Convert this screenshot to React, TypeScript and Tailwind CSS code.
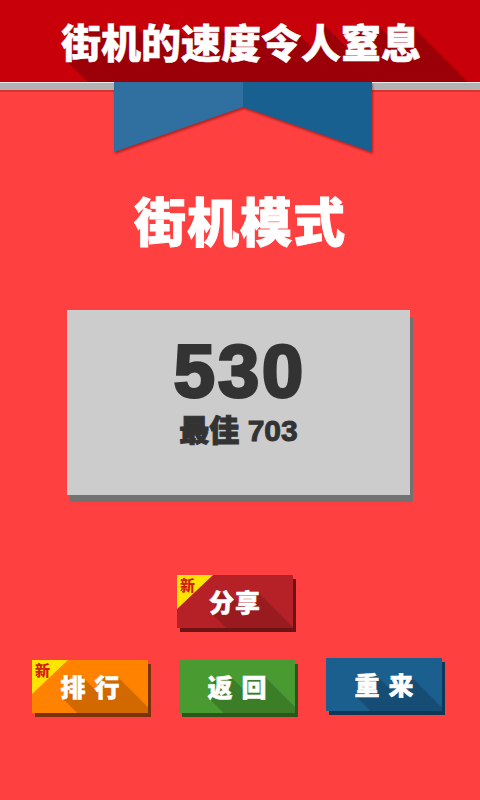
import React from "react";

// long diagonal shadow behind text, colour comes from --ls
const longShadow =
  "[text-shadow:1px_1px_0_var(--ls),2px_2px_0_var(--ls),4px_4px_0_var(--ls),6px_6px_0_var(--ls),8px_8px_0_var(--ls),10px_10px_0_var(--ls),12px_12px_0_var(--ls),14px_14px_0_var(--ls),16px_16px_0_var(--ls),18px_18px_0_var(--ls),20px_20px_0_var(--ls),22px_22px_0_var(--ls),24px_24px_0_var(--ls),26px_26px_0_var(--ls),28px_28px_0_var(--ls),30px_30px_0_var(--ls),32px_32px_0_var(--ls),34px_34px_0_var(--ls),36px_36px_0_var(--ls),38px_38px_0_var(--ls),40px_40px_0_var(--ls),42px_42px_0_var(--ls),44px_44px_0_var(--ls),46px_46px_0_var(--ls),48px_48px_0_var(--ls),50px_50px_0_var(--ls),52px_52px_0_var(--ls),54px_54px_0_var(--ls),56px_56px_0_var(--ls),58px_58px_0_var(--ls),60px_60px_0_var(--ls)]";

const cjk = "font-['Noto_Sans_CJK_SC',sans-serif]";

type BtnProps = {
  label: string;
  bg: string;
  isNew?: boolean;
  spaced?: boolean;
};

function GameButton({ label, bg, isNew, spaced }: BtnProps) {
  return (
    <button
      className={`relative w-[116px] h-[53px] overflow-hidden flex items-center justify-center ${bg}`}
    >
      <span
        className={`${cjk} ${longShadow} text-white font-black text-[25px] leading-none [-webkit-text-stroke:0.5px_#ffffff] ${
          spaced ? "tracking-[9px] pl-[9px]" : "tracking-[1px]"
        }`}
      >
        {label}
      </span>
      {isNew && (
        <span className="absolute left-0 top-0 w-[36px] h-[34px] bg-[#ffe400] [clip-path:polygon(0_0,100%_0,0_100%)]">
          <span
            className={`${cjk} absolute left-[3px] top-[2px] text-[15px] leading-none font-black text-[#d0200f]`}
          >
            新
          </span>
        </span>
      )}
    </button>
  );
}

export default function App() {
  return (
    <div className="w-[480px] h-[800px] bg-[#fe4040] flex flex-col overflow-hidden">
      {/* top banner */}
      <div className="h-[82px] bg-[#c7000a] flex items-center justify-center overflow-hidden [--ls:#9b0008]">
        <h1
          className={`${cjk} ${longShadow} text-white font-black text-[40px] leading-none pl-[2px] [-webkit-text-stroke:0.5px_#ffffff]`}
        >
          街机的速度令人窒息
        </h1>
      </div>

      {/* grey rule with the ribbon hanging off it */}
      <div className="flex items-start h-[70px]">
        <div className="w-[114px] h-[10px] flex flex-col">
          <div className="h-[1px] bg-[#ececec]" />
          <div className="h-[7px] bg-[#b3b3b3]" />
          <div className="h-[2px] bg-[#d83434]" />
        </div>
        <svg
          width="258"
          height="70"
          viewBox="0 0 258 70"
          className="drop-shadow-[1px_2px_1px_rgba(90,0,0,0.45)]"
        >
          <polygon points="0,0 129,0 129,25 0,70" fill="#2f70a0" />
          <polygon points="129,0 258,0 258,70 129,25" fill="#17608f" />
        </svg>
        <div className="flex-1 h-[10px] flex flex-col">
          <div className="h-[1px] bg-[#ececec]" />
          <div className="h-[7px] bg-[#b3b3b3]" />
          <div className="h-[2px] bg-[#d83434]" />
        </div>
      </div>

      {/* mode title */}
      <h2
        className={`${cjk} mt-[42px] h-[52px] text-center text-white font-black text-[52px] leading-none tracking-[1px] [-webkit-text-stroke:1px_#ffffff]`}
      >
        街机模式
      </h2>

      {/* score card */}
      <div className="mt-[64px] ml-[67px] w-[343px] h-[185px] bg-[#cccccc] shadow-[3px_7px_0_#727272] flex flex-col items-center pt-[25px]">
        <div className="font-['Liberation_Sans',sans-serif] font-bold text-[74px] leading-none text-[#333333] tracking-[3px] pl-[3px] [-webkit-text-stroke:3px_#333333]">
          530
        </div>
        <div className="mt-[7px] font-['Liberation_Sans','Noto_Sans_CJK_SC',sans-serif] font-black text-[30px] leading-none text-[#333333] [-webkit-text-stroke:1px_#333333]">
          最佳 703
        </div>
      </div>

      {/* share */}
      <div className="mt-[80px] ml-[177px] flex">
        <div className="shadow-[3px_4px_0_#6e1313] [--ls:#9a1b1f]">
          <GameButton label="分享" bg="bg-[#b52126]" isNew />
        </div>
      </div>

      {/* bottom row */}
      <div className="mt-[32px] ml-[32px] flex items-start gap-[31px]">
        <div className="shadow-[3px_4px_0_#7a3208] [--ls:#d26800]">
          <GameButton label="排行" bg="bg-[#ff8300]" isNew spaced />
        </div>
        <div className="shadow-[3px_4px_0_#2b561c] [--ls:#3c7e27]">
          <GameButton label="返回" bg="bg-[#4a9a32]" spaced />
        </div>
        <div className="-mt-[2px] shadow-[3px_4px_0_#0e3856] [--ls:#154d75]">
          <GameButton label="重来" bg="bg-[#1b5f8e]" spaced />
        </div>
      </div>
    </div>
  );
}
